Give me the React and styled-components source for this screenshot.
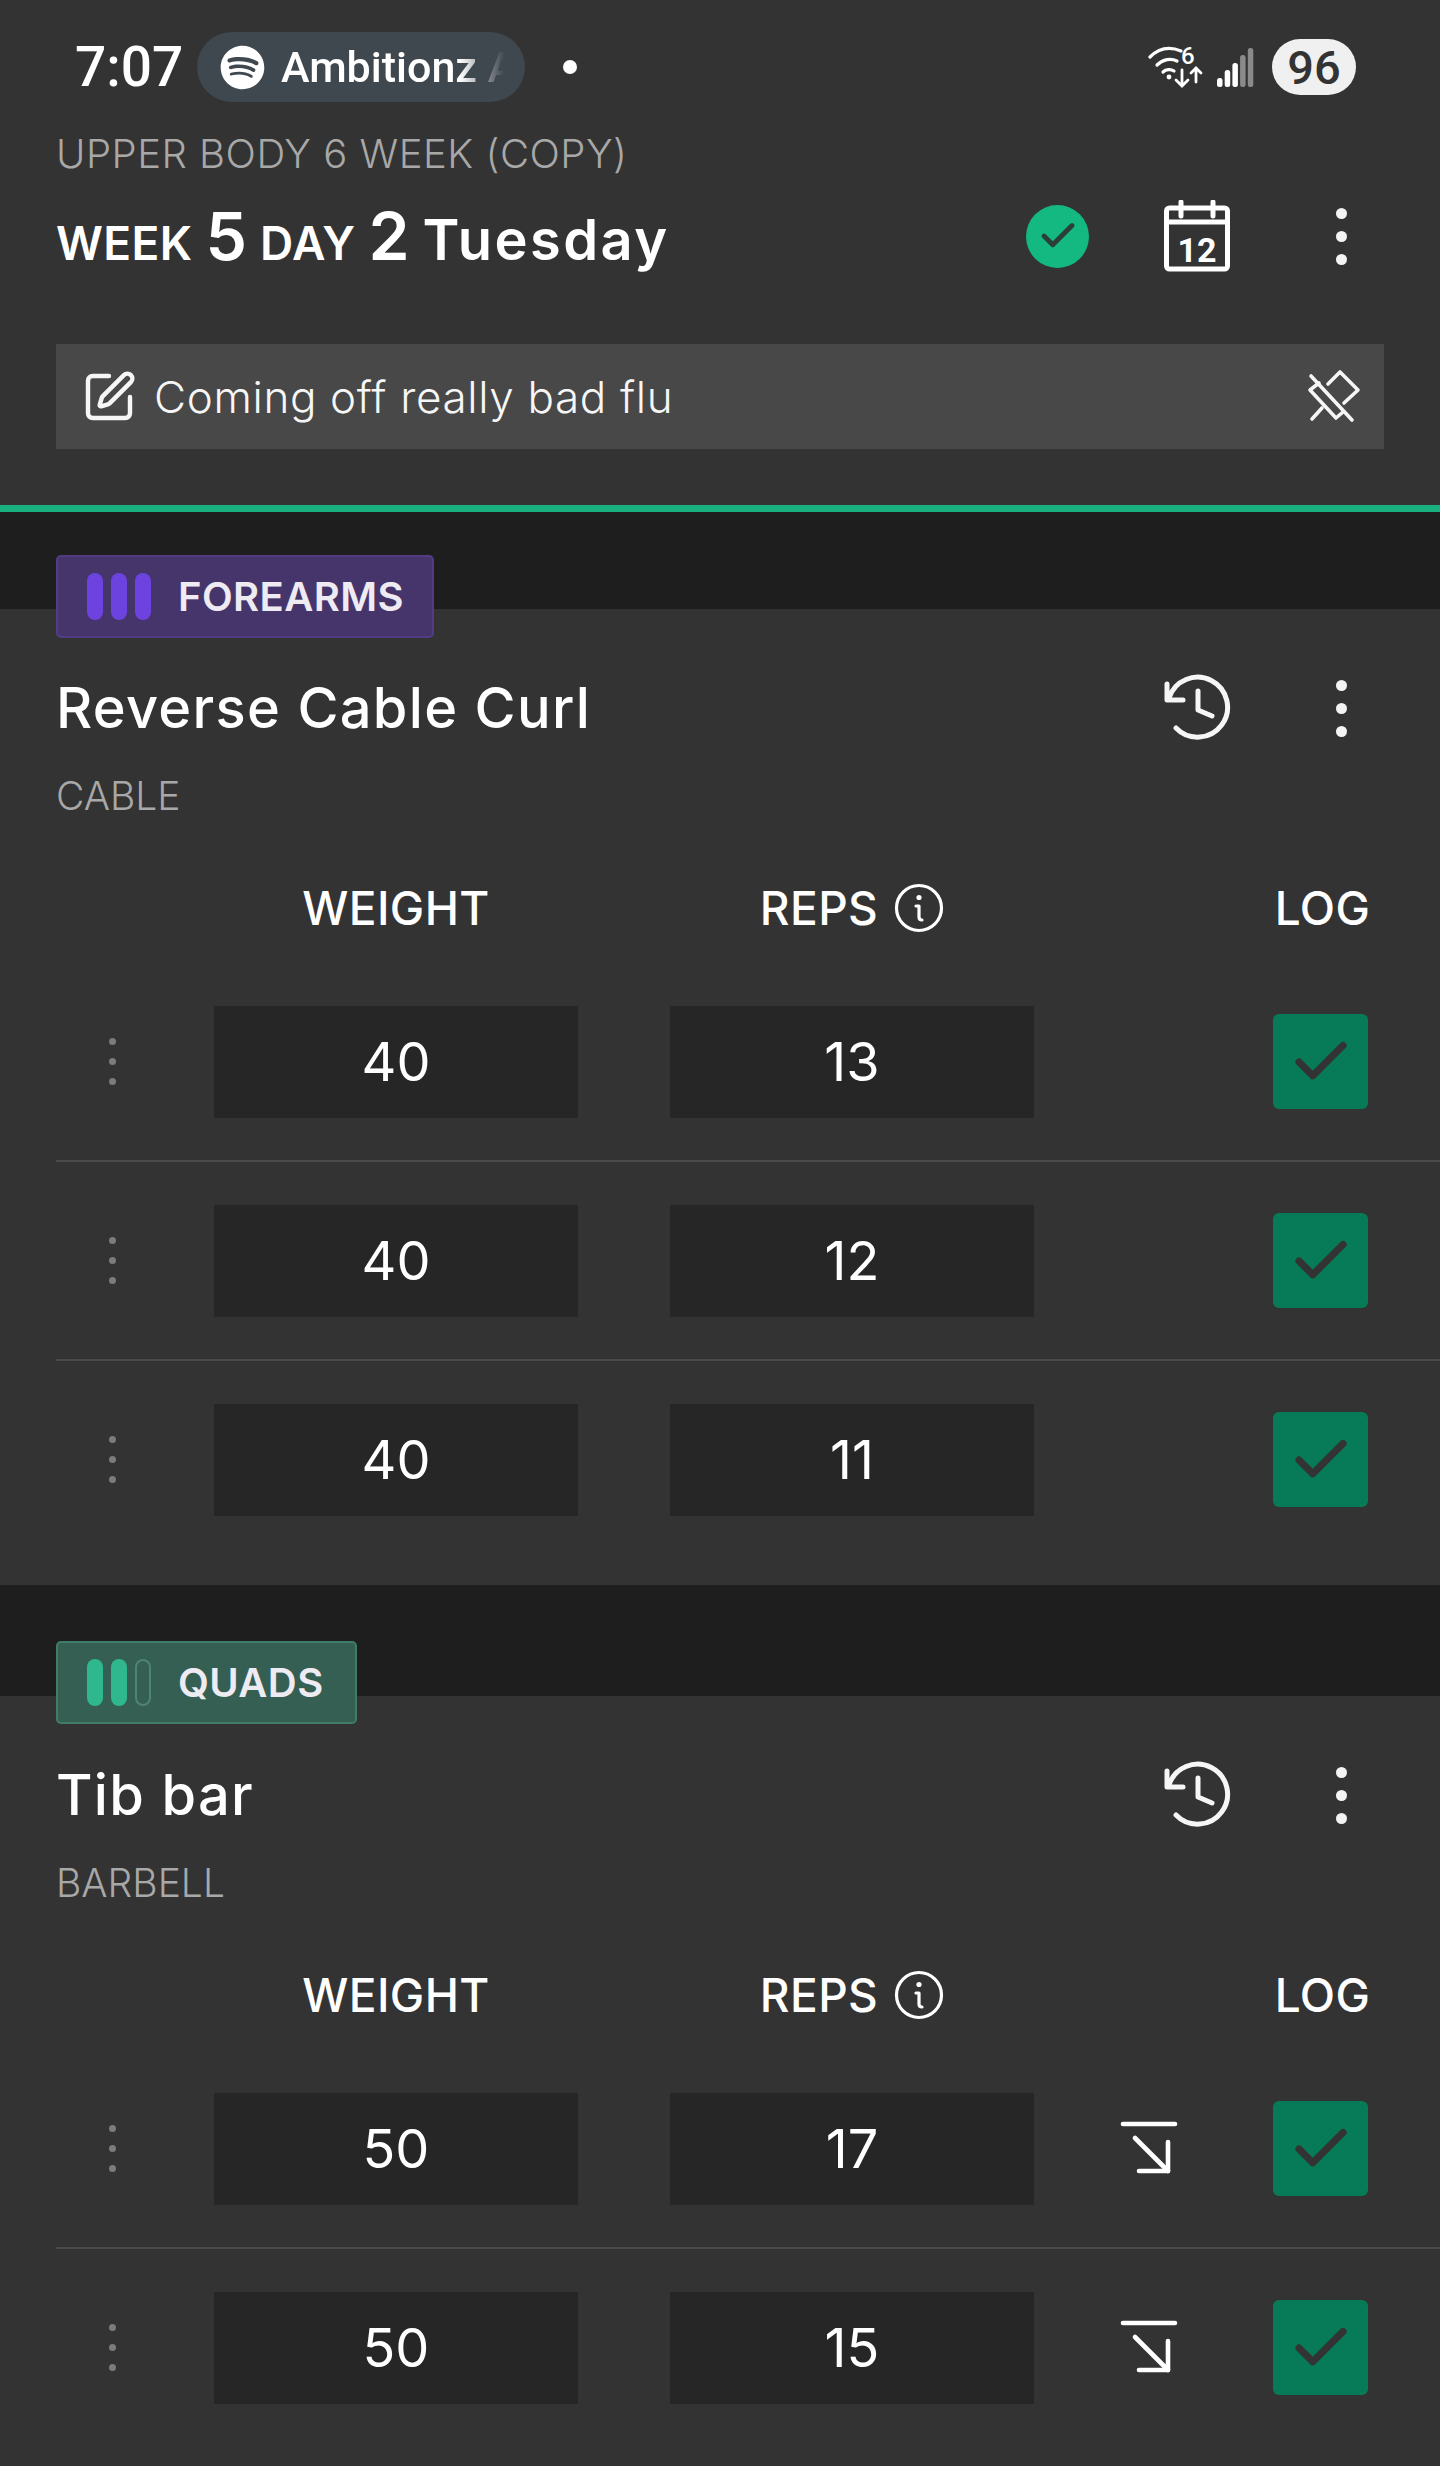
import styled, { createGlobalStyle } from 'styled-components';
import { FaSpotify } from 'react-icons/fa';
import { Check, SquarePen } from 'lucide-react';

const GlobalStyle = createGlobalStyle`
  html, body {
    margin: 0;
    padding: 0;
    background: #333333;
  }
  * {
    box-sizing: border-box;
  }
`;

const Page = styled.div`
  width: 1440px;
  height: 2466px;
  overflow: hidden;
  background: #333333;
  color: #ffffff;
  font-family: Inter, 'Open Sans', sans-serif;
`;

// #region Status bar

const StatusBar = styled.div`
  display: flex;
  align-items: center;
  height: 70px;
  margin-top: 32px;
  padding: 0 84px 0 75px;
  font-family: Roboto, sans-serif;
`;

const Time = styled.span`
  font-size: 55px;
  font-weight: 500;
  width: 122px;
`;

const MediaPill = styled.div`
  display: flex;
  align-items: center;
  gap: 16px;
  width: 328px;
  height: 70px;
  padding-left: 23px;
  border-radius: 35px;
  background: #3f474f;
`;

const MediaTitle = styled.span`
  font-size: 43px;
  font-weight: 500;
  white-space: nowrap;
  -webkit-mask-image: linear-gradient(to right, #000 76%, transparent 95%);
  mask-image: linear-gradient(to right, #000 76%, transparent 95%);
`;

const Dot = styled.span`
  width: 14px;
  height: 14px;
  margin-left: 38px;
  border-radius: 50%;
  background: #ffffff;
`;

const StatusIcons = styled.div`
  display: flex;
  align-items: center;
  margin-left: auto;
  gap: 13px;
`;

const Battery = styled.div`
  display: flex;
  align-items: center;
  justify-content: center;
  width: 84px;
  height: 56px;
  margin-left: 4px;
  border-radius: 28px;
  background: #f0f0f0;
  color: #333333;
  font-size: 47px;
  font-weight: 500;
`;

// #endregion

const WorkoutHeader = styled.header`
  padding: 0 56px;
`;

const Program = styled.div`
  margin-top: 28px;
  font-size: 40px;
  font-weight: 300;
  line-height: 48px;
  letter-spacing: 0.5px;
  color: #a8a8a8;
`;

const DayRow = styled.div`
  display: flex;
  align-items: center;
  height: 70px;
  margin-top: 23px;
`;

const DayTitle = styled.h1`
  display: flex;
  align-items: baseline;
  gap: 13px;
  margin: 0;
  font-size: 56px;
  font-weight: 600;
  white-space: nowrap;
`;

const DayLabel = styled.span`
  font-size: 46px;
  letter-spacing: 0.4px;
`;

const DayNumber = styled.span`
  font-size: 66px;
`;

const DayName = styled.span`
  letter-spacing: 2.4px;
`;

const DayActions = styled.div`
  display: flex;
  align-items: center;
  margin-left: auto;
`;

const DoneCircle = styled.div`
  display: flex;
  align-items: center;
  justify-content: center;
  width: 63px;
  height: 63px;
  margin-right: 72px;
  border-radius: 50%;
  background: #14b981;
  color: #2b3f38;
`;

const IconSlot = styled.div`
  display: flex;
  align-items: center;
  justify-content: center;
  width: 72px;
`;

const Menu = styled.div`
  display: flex;
  flex-direction: column;
  gap: 12px;
  width: 11px;
  margin-left: 103px;
  margin-right: 37px;

  & span {
    width: 11px;
    height: 11px;
    border-radius: 50%;
    background: #f4f4f4;
  }
`;

const NoteBar = styled.div`
  display: flex;
  align-items: center;
  height: 105px;
  margin-top: 73px;
  padding: 0 23px 0 25px;
  background: #484848;
  font-size: 44px;
  font-weight: 300;
  letter-spacing: 0.65px;
  color: #f6f6f6;
`;

const NoteText = styled.span`
  margin-left: 17px;
`;

const NotePin = styled.div`
  display: flex;
  margin-left: auto;
`;

const ProgressLine = styled.div`
  height: 7px;
  margin-top: 56px;
  background: #19b07f;
`;

const Band = styled.div`
  height: ${p => p.$height}px;
  padding: ${p => p.$offset}px 56px 0;
  background: #1e1e1e;
`;

const MuscleBadge = styled.div`
  position: relative;
  z-index: 1;
  display: flex;
  align-items: center;
  width: ${p => p.$width}px;
  height: 83px;
  padding-left: 29px;
  border: 2px solid ${p => p.$border};
  border-radius: 5px;
  background: ${p => p.$bg};
  color: #eeebf3;
  font-size: 40px;
  font-weight: 600;
  letter-spacing: 0.4px;
`;

const Bars = styled.div`
  display: flex;
  gap: 8px;
  margin-right: 27px;
`;

const Bar = styled.span`
  width: 16px;
  height: 47px;
  border-radius: 8px;
  background: ${p => (p.$empty ? 'transparent' : p.$color)};
  border: ${p => (p.$empty ? `2px solid ${p.$color}55` : 'none')};
`;

const Card = styled.section`
  padding: 64px 0 27px 56px;
`;

const TitleRow = styled.div`
  display: flex;
  align-items: center;
  height: 70px;
  padding-right: 56px;
`;

const ExerciseName = styled.h2`
  margin: 0;
  font-size: 56px;
  font-weight: 500;
  letter-spacing: 1.3px;
`;

const TitleActions = styled.div`
  display: flex;
  align-items: center;
  margin-left: auto;
`;

const Equipment = styled.div`
  margin-top: 29px;
  font-size: 39px;
  font-weight: 300;
  line-height: 48px;
  color: #a8a8a8;
`;

const SetGrid = styled.div`
  display: grid;
  grid-template-columns: 112px 410px 456px 1fr 95px;
  align-items: center;
  height: ${p => p.$height}px;
  margin-top: ${p => p.$top || 0}px;
  padding-right: 72px;
  border-bottom: ${p => (p.$line ? '2px solid #4a4a4a' : 'none')};
`;

const ColumnLabel = styled.div`
  display: flex;
  align-items: center;
  justify-content: center;
  gap: 16px;
  margin-left: ${p => p.$shift || 0}px;
  font-size: 46px;
  font-weight: 500;
  letter-spacing: 0.4px;
  white-space: nowrap;
`;

const WeightCell = styled.div`
  display: flex;
  align-items: center;
  justify-content: center;
  height: 112px;
  margin-left: ${p => p.$shift}px;
  background: #262626;
  font-size: 54px;
  font-weight: 400;
`;

const DragHandle = styled.div`
  display: flex;
  flex-direction: column;
  align-items: center;
  gap: 13px;

  & span {
    width: 7px;
    height: 7px;
    border-radius: 50%;
    background: #7c7c7c;
  }
`;

const CopyDown = styled.div`
  display: flex;
  justify-content: center;
  padding-right: 7px;
`;

const LogButton = styled.div`
  display: flex;
  align-items: center;
  justify-content: center;
  width: 95px;
  height: 95px;
  border-radius: 6px;
  background: #077a58;
  color: #333333;
`;

function WifiIcon() {
  return (
    <svg width="56" height="58" viewBox="0 -8 56 58" fill="none" stroke="#fff" strokeWidth="3.2" strokeLinecap="round">
      <path d="M2 11C10 3 21 0 33 5" />
      <path d="M9 19C15 13 23 12 29 15" />
      <path d="M15 26C18 23 23 23 26 25" />
      <circle cx="21" cy="31" r="2.4" fill="#fff" stroke="none" />
      <text x="33" y="18" fontFamily="Roboto, sans-serif" fontWeight="500" fontSize="24" fill="#fff" stroke="none">
        6
      </text>
      <path d="M34 24V39M28 34L34 40L40 34" strokeWidth="2.8" />
      <path d="M48 36V22M43 27L48 22L53 27" strokeWidth="2.8" />
    </svg>
  );
}

function SignalIcon() {
  return (
    <svg width="38" height="40" viewBox="0 0 38 40" fill="#fff">
      <rect x="0" y="31" width="5.5" height="9" rx="2.5" />
      <rect x="7.7" y="23" width="5.5" height="17" rx="2.5" />
      <rect x="15.4" y="16" width="5.5" height="24" rx="2.5" />
      <rect x="23.1" y="8" width="5.5" height="32" rx="2.5" fill="#8a8a8a" />
      <rect x="30.8" y="1" width="5.5" height="39" rx="2.5" fill="#8a8a8a" />
    </svg>
  );
}

function CalendarIcon() {
  return (
    <svg width="66" height="72" viewBox="0 0 66 72" fill="none" stroke="#fff" strokeWidth="5" strokeLinejoin="round" strokeLinecap="round">
      <rect x="2.5" y="8" width="61" height="61" rx="3" />
      <path d="M3 22h60" />
      <path d="M17 2v14M49 2v14" />
      <text x="33" y="62" textAnchor="middle" fontFamily="Roboto, sans-serif" fontWeight="700" fontSize="34" fill="#fff" stroke="none">
        12
      </text>
    </svg>
  );
}

function HistoryIcon() {
  return (
    <svg width="72" height="72" viewBox="0 0 72 72" fill="none" stroke="#f6f6f6" strokeWidth="5" strokeLinecap="round" strokeLinejoin="round">
      <path d="M8 26A30 30 0 1 1 15 56" />
      <path d="M6 12V28H22" />
      <path d="M37 19V38L51 44" />
    </svg>
  );
}

function CopyDownIcon() {
  return (
    <svg width="60" height="56" viewBox="0 0 60 56" fill="none" stroke="#fff" strokeWidth="4.6" strokeLinecap="round" strokeLinejoin="round">
      <path d="M3 3H55" />
      <path d="M15 17L48 50" />
      <path d="M48 21V50H19" />
    </svg>
  );
}

function PinOffIcon() {
  return (
    <svg width="56" height="56" viewBox="0 0 56 56" fill="none" stroke="#f6f6f6" strokeWidth="3.6" strokeLinecap="round" strokeLinejoin="round">
      <path d="M6 7L47 51" />
      <path d="M23 15L35 3L53 21L39 34" />
      <path d="M14 14L5 21L31 49L38 43" />
      <path d="M7 50L17 39" />
    </svg>
  );
}

function InfoIcon() {
  return (
    <svg width="50" height="50" viewBox="0 0 50 50" fill="none" stroke="#fff" strokeWidth="3.2" strokeLinecap="round" strokeLinejoin="round">
      <circle cx="25" cy="25" r="22.5" />
      <circle cx="25" cy="14.5" r="2.6" fill="#fff" stroke="none" />
      <path d="M22 23H25V34C25 36 26 37 28 37" />
    </svg>
  );
}

function LogRow({ weight, reps, copyDown, line }) {
  return (
    <SetGrid $height={line ? 199 : 197} $line={line}>
      <DragHandle>
        <span />
        <span />
        <span />
      </DragHandle>
      <WeightCell $shift={46}>{weight}</WeightCell>
      <WeightCell $shift={92}>{reps}</WeightCell>
      <CopyDown>{copyDown && <CopyDownIcon />}</CopyDown>
      <LogButton>
        <Check size={66} strokeWidth={2.6} />
      </LogButton>
    </SetGrid>
  );
}

function Exercise({ name, equipment, sets, copyDown }) {
  return (
    <Card>
      <TitleRow>
        <ExerciseName>{name}</ExerciseName>
        <TitleActions>
          <IconSlot>
            <HistoryIcon />
          </IconSlot>
          <Menu>
            <span />
            <span />
            <span />
          </Menu>
        </TitleActions>
      </TitleRow>
      <Equipment>{equipment}</Equipment>
      <SetGrid $height={111} $top={32}>
        <span />
        <ColumnLabel $shift={46}>WEIGHT</ColumnLabel>
        <ColumnLabel $shift={92}>
          REPS
          <InfoIcon />
        </ColumnLabel>
        <span />
        <ColumnLabel $shift={4}>LOG</ColumnLabel>
      </SetGrid>
      {sets.map((set, i) => (
        <LogRow key={i} weight={set[0]} reps={set[1]} copyDown={copyDown} line={i < sets.length - 1} />
      ))}
    </Card>
  );
}

export default function App() {
  return (
    <Page>
      <GlobalStyle />
      <StatusBar>
        <Time>7:07</Time>
        <MediaPill>
          <FaSpotify size={45} color="#ffffff" />
          <MediaTitle>Ambitionz A</MediaTitle>
        </MediaPill>
        <Dot />
        <StatusIcons>
          <WifiIcon />
          <SignalIcon />
          <Battery>96</Battery>
        </StatusIcons>
      </StatusBar>
      <WorkoutHeader>
        <Program>UPPER BODY 6 WEEK (COPY)</Program>
        <DayRow>
          <DayTitle>
            <DayLabel>WEEK</DayLabel>
            <DayNumber>5</DayNumber>
            <DayLabel>DAY</DayLabel>
            <DayNumber>2</DayNumber>
            <DayName>Tuesday</DayName>
          </DayTitle>
          <DayActions>
            <DoneCircle>
              <Check size={42} strokeWidth={2.8} />
            </DoneCircle>
            <IconSlot>
              <CalendarIcon />
            </IconSlot>
            <Menu>
              <span />
              <span />
              <span />
            </Menu>
          </DayActions>
        </DayRow>
        <NoteBar>
          <SquarePen size={56} strokeWidth={1.9} />
          <NoteText>Coming off really bad flu</NoteText>
          <NotePin>
            <PinOffIcon />
          </NotePin>
        </NoteBar>
      </WorkoutHeader>
      <ProgressLine />
      <Band $height={97} $offset={43}>
        <MuscleBadge $width={378} $bg="#46356b" $border="#523d85">
          <Bars>
            <Bar $color="#6d43e0" />
            <Bar $color="#6d43e0" />
            <Bar $color="#6d43e0" />
          </Bars>
          FOREARMS
        </MuscleBadge>
      </Band>
      <Exercise
        name="Reverse Cable Curl"
        equipment="CABLE"
        sets={[
          ['40', '13'],
          ['40', '12'],
          ['40', '11'],
        ]}
      />
      <Band $height={111} $offset={56}>
        <MuscleBadge $width={301} $bg="#355f53" $border="#3f7d68">
          <Bars>
            <Bar $color="#2fb88d" />
            <Bar $color="#2fb88d" />
            <Bar $color="#7fd0b5" $empty />
          </Bars>
          QUADS
        </MuscleBadge>
      </Band>
      <Exercise
        name="Tib bar"
        equipment="BARBELL"
        copyDown
        sets={[
          ['50', '17'],
          ['50', '15'],
        ]}
      />
    </Page>
  );
}
